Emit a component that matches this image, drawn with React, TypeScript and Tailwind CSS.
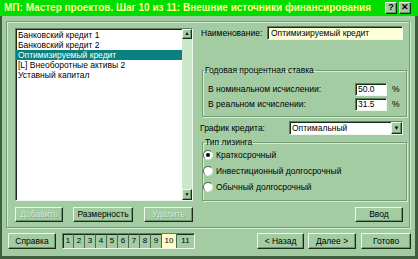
import React from "react";

const raised =
  "border border-t-[#eef8ee] border-l-[#eef8ee] border-b-[#1c2c1c] border-r-[#1c2c1c] shadow-[inset_-1px_-1px_0_#6f936f]";
const sunken =
  "border border-t-[#5f805f] border-l-[#5f805f] border-b-[#eef8ee] border-r-[#eef8ee] shadow-[inset_1px_1px_0_#1c2c1c]";

function Btn({ label, w, disabled, className = "" }: { label: string; w: string; disabled?: boolean; className?: string }) {
  return (
    <button
      className={`${w} h-[15px] flex items-center justify-center bg-[#a3cca3] text-[8.5px] leading-none ${raised} ${
        disabled ? "text-[#d2e8d2] [text-shadow:1px_1px_0_#88aa88]" : "text-black"
      } ${className}`}
    >
      {label}
    </button>
  );
}

function Radio({ label, checked }: { label: string; checked?: boolean }) {
  return (
    <div className="h-[16px] flex items-center">
      <span className="w-[10px] h-[10px] rounded-full bg-white border border-t-[#4a6a4a] border-l-[#4a6a4a] border-b-[#d8ecd8] border-r-[#d8ecd8] flex items-center justify-center">
        {checked && <span className="w-[4px] h-[4px] rounded-full bg-black" />}
      </span>
      <span className="ml-[3px]">{label}</span>
    </div>
  );
}

const items = [
  "Банковский кредит 1",
  "Банковский кредит 2",
  "Оптимизируемый кредит",
  "[L] Внеоборотные активы 2",
  "Уставный капитал",
];

export default function App() {
  return (
    <div
      className="w-[418px] h-[259px] flex flex-col bg-[#a3cca3] text-[8.5px] text-black overflow-hidden"
      style={{ fontFamily: '"Liberation Sans", Arial, sans-serif' }}
    >
      {/* title bar */}
      <div className="h-[16px] bg-[#00de00] flex items-center pl-[4px] pr-[7px]">
        <span className="text-[10px] font-bold text-[#ffff8c] leading-none">
          МП: Мастер проектов. Шаг 10 из 11: Внешние источники финансирования
        </span>
        <div className="ml-auto flex gap-[2px]">
          <span className={`w-[12px] h-[12px] bg-[#a3cca3] flex items-center justify-center text-[9px] font-bold ${raised}`}>?</span>
          <span className={`w-[12px] h-[12px] bg-[#a3cca3] flex items-center justify-center text-[9px] font-bold ${raised}`}>✕</span>
        </div>
      </div>

      <div className="flex-1 flex flex-col border-l-2 border-r-[3px] border-b-[3px] border-[#3e5e3e]">
        {/* main panel */}
        <div className="mt-[5px] ml-[4px] mr-[5px] h-[207px] border border-[#789c78] shadow-[inset_1px_1px_0_#d4ecd4,1px_1px_0_#d4ecd4] flex flex-col">
          <div className="flex items-start">
            {/* list */}
            <div className={`ml-[8px] mt-[6px] w-[178px] h-[173px] bg-white flex ${sunken}`}>
              <div className="flex-1 pt-[1px]">
                {items.map((t, i) => (
                  <div
                    key={t}
                    className={`h-[10px] leading-[10px] pl-[2px] ${i === 2 ? "bg-[#0a8080] text-white" : ""}`}
                  >
                    {t}
                  </div>
                ))}
              </div>
              <div className="w-[10px] bg-[#cce6cc] flex flex-col justify-between">
                <span className={`h-[10px] bg-[#a3cca3] flex items-center justify-center text-[5px] ${raised}`}>▲</span>
                <span className={`h-[11px] bg-[#a3cca3] flex items-center justify-center text-[5px] ${raised}`}>▼</span>
              </div>
            </div>

            {/* right column */}
            <div className="ml-[7px] w-[208px] flex flex-col">
              <div className="mt-[4px] h-[14px] flex items-center">
                <span className="w-[67px] pl-[1px]">Наименование:</span>
                <div className={`w-[136px] h-[14px] bg-[#ffffd8] flex items-center pl-[3px] ${sunken}`}>
                  Оптимизируемый кредит
                </div>
              </div>

              <fieldset className="mt-[25px] ml-[2px] w-[205px] h-[52px] border border-[#789c78] shadow-[inset_1px_1px_0_#d4ecd4,1px_1px_0_#d4ecd4] px-[5px]">
                <legend className="leading-[10px] px-[1px] ml-[-4px]">Годовая процентная ставка</legend>
                <div className="mt-[8px] h-[13px] flex items-center">
                  <span className="w-[147px]">В номинальном исчислении:</span>
                  <div className={`w-[32px] h-[13px] bg-white pl-[2px] flex items-center ${sunken}`}>50.0</div>
                  <span className="ml-[5px]">%</span>
                </div>
                <div className="mt-[2px] h-[13px] flex items-center">
                  <span className="w-[147px]">В реальном исчислении:</span>
                  <div className={`w-[32px] h-[13px] bg-white pl-[2px] flex items-center ${sunken}`}>31.5</div>
                  <span className="ml-[5px]">%</span>
                </div>
              </fieldset>

              <div className="mt-[4px] h-[14px] flex items-center">
                <span className="w-[89px]">График кредита:</span>
                <div className={`w-[114px] h-[14px] bg-white flex items-center ${sunken}`}>
                  <span className="flex-1 pl-[2px]">Оптимальный</span>
                  <span className={`w-[11px] h-[12px] bg-[#a3cca3] flex items-center justify-center text-[6px] ${raised}`}>▼</span>
                </div>
              </div>

              <fieldset className="mt-[2px] ml-[2px] w-[205px] h-[64px] border border-[#789c78] shadow-[inset_1px_1px_0_#d4ecd4,1px_1px_0_#d4ecd4] px-0">
                <legend className="leading-[10px] px-[1px] ml-[1px]">Тип лизинга</legend>
                <Radio label="Краткосрочный" checked />
                <Radio label="Инвестиционный долгосрочный" />
                <Radio label="Обычный долгосрочный" />
              </fieldset>
            </div>
          </div>

          {/* button row */}
          <div className="mt-[6px] ml-[8px] mr-[6px] flex items-center">
            <Btn label="Добавить" w="w-[48px]" disabled />
            <Btn label="Размерность" w="w-[60px]" className="ml-[10px]" />
            <Btn label="Удалить" w="w-[49px]" disabled className="ml-[11px]" />
            <Btn label="Ввод" w="w-[48px]" className="ml-auto" />
          </div>
        </div>

        {/* bottom row */}
        <div className="mt-[5px] ml-[6px] flex items-center">
          <Btn label="Справка" w="w-[48px]" className="h-[16px]" />
          <div className={`ml-[6px] h-[16px] flex ${sunken}`}>
            {["1", "2", "3", "4", "5", "6", "7", "8", "9", "10", "11"].map((n) => (
              <span
                key={n}
                className={`h-full flex items-center justify-center text-[8px] border-r border-[#4a6a4a] ${
                  n === "10" ? "w-[15px] bg-[#ffffc8]" : n === "11" ? "w-[17px] border-r-0" : "w-[11px]"
                }`}
              >
                {n}
              </span>
            ))}
          </div>
          <Btn label="< Назад" w="w-[47px]" className="h-[16px] ml-[62px]" />
          <Btn label="Далее >" w="w-[48px]" className="h-[16px] ml-[4px]" />
          <Btn label="Готово" w="w-[50px]" className="h-[16px] ml-[5px]" />
        </div>
      </div>
    </div>
  );
}
